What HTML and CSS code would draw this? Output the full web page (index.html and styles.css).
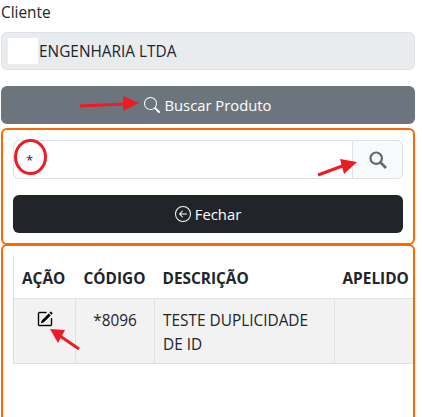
FILE: index.html
```html
<!DOCTYPE html>
<html lang="en">
<head>
  <meta charset="UTF-8" />
  <meta name="viewport" content="width=device-width, initial-scale=1.0"/>
  <title>Buscar Produto</title>
  <link rel="stylesheet" href="styles.css">
</head>
<body>
  <div class="page">
    <label class="field-label">Cliente</label>
    <div class="client-field">
      <span class="client-mask"></span>
      <span>ENGENHARIA LTDA</span>
    </div>

    <button class="btn btn-secondary">
      <svg class="icon" viewBox="0 0 16 16" fill="currentColor"><path d="M11.742 10.344a6.5 6.5 0 1 0-1.397 1.398h-.001c.03.04.062.078.098.115l3.85 3.85a1 1 0 0 0 1.415-1.414l-3.85-3.85a1.007 1.007 0 0 0-.115-.1zM12 6.5a5.5 5.5 0 1 1-11 0 5.5 5.5 0 0 1 11 0z"/></svg>
      Buscar Produto
    </button>

    <!-- Search panel -->
    <div class="panel panel-search">
      <div class="input-group">
        <input class="search-input" type="text" value="*">
        <button class="search-btn">
          <svg class="icon-lg" viewBox="0 0 18 18" fill="none" stroke="currentColor"><circle cx="7.2" cy="7.2" r="5.7" stroke-width="2.2"/><path d="M11.5 11.5 L17 17" stroke-width="2.6"/></svg>
        </button>
      </div>
      <button class="btn btn-dark">
        <svg class="icon" viewBox="0 0 16 16" fill="currentColor"><path fill-rule="evenodd" d="M1 8a7 7 0 1 0 14 0A7 7 0 0 0 1 8zm15 0A8 8 0 1 1 0 8a8 8 0 0 1 16 0zm-4.5-.5a.5.5 0 0 1 0 1H5.707l2.147 2.146a.5.5 0 0 1-.708.708l-3-3a.5.5 0 0 1 0-.708l3-3a.5.5 0 1 1 .708.708L5.707 7.5H11.5z"/></svg>
        Fechar
      </button>
    </div>

    <!-- Results -->
    <div class="panel panel-results">
      <table class="results">
        <thead>
          <tr>
            <th class="col-acao">AÇÃO</th>
            <th class="col-codigo">CÓDIGO</th>
            <th class="col-desc">DESCRIÇÃO</th>
            <th class="col-apelido">APELIDO</th>
          </tr>
        </thead>
        <tbody>
          <tr>
            <td class="center">
              <svg class="icon-edit" viewBox="0 0 16 16" fill="currentColor"><path d="M15.502 1.94a.5.5 0 0 1 0 .706L14.459 3.69l-2-2L13.502.646a.5.5 0 0 1 .707 0l1.293 1.293zm-1.75 2.456-2-2L4.939 9.21a.5.5 0 0 0-.121.196l-.805 2.414a.25.25 0 0 0 .316.316l2.414-.805a.5.5 0 0 0 .196-.12l6.813-6.814z"/><path fill-rule="evenodd" stroke="currentColor" stroke-width=".4" d="M1 13.5A1.5 1.5 0 0 0 2.5 15h11a1.5 1.5 0 0 0 1.5-1.5v-6a.5.5 0 0 0-1 0v6a.5.5 0 0 1-.5.5h-11a.5.5 0 0 1-.5-.5v-11a.5.5 0 0 1 .5-.5H9a.5.5 0 0 0 0-1H2.5A1.5 1.5 0 0 0 1 2.5v11z"/></svg>
            </td>
            <td class="center">*8096</td>
            <td>TESTE DUPLICIDADE DE ID</td>
            <td></td>
          </tr>
        </tbody>
      </table>
    </div>
  </div>

  <!-- Red annotations drawn over the screenshot -->
  <svg class="marks" width="422" height="417" viewBox="0 0 422 417">
    <ellipse cx="30.5" cy="157" rx="15" ry="16.5" fill="none" stroke="#ed1c24" stroke-width="3"/>
    <path d="M80 106 L124 104" stroke="#ed1c24" stroke-width="3" fill="none"/>
    <path d="M123 96 L139 103 L123 111 Z" fill="#ed1c24"/>
    <path d="M318 175 L345 165" stroke="#ed1c24" stroke-width="3" fill="none"/>
    <path d="M340 159 L357 162 L344 174 Z" fill="#ed1c24"/>
    <path d="M79 349 L60 336" stroke="#ed1c24" stroke-width="3" fill="none"/>
    <path d="M50 329 L65 330 L58 343 Z" fill="#ed1c24"/>
  </svg>
</body>
</html>
```

FILE: styles.css
```css
html, body {
  margin: 0;
  height: 417px;
  overflow: hidden;
}
body {
  font-family: "Open Sans", sans-serif;
  font-size: 15.4px;
  color: #212529;
  background: #fff;
  position: relative;
}
.page {
  width: 414px;
  margin-left: 1px;
}
.field-label {
  display: block;
  height: 32px;
  line-height: 26px;
}
.client-field {
  display: flex;
  align-items: center;
  gap: 1px;
  height: 38px;
  box-sizing: border-box;
  padding-left: 6px;
  background: #e9ecef;
  border: 1px solid #dee2e6;
  border-radius: 6px;
}
.client-mask {
  width: 30px;
  height: 26px;
  background: #fff;
}
.btn {
  display: flex;
  align-items: center;
  justify-content: center;
  gap: 4px;
  width: 100%;
  height: 38px;
  border: none;
  border-radius: 6px;
  color: #fff;
  font: inherit;
  font-size: 14.8px;
}
.btn-secondary {
  margin: 16px 0 4px;
  background: #6c757d;
}
.btn-dark {
  background: #212529;
}
.icon {
  width: 16px;
  height: 16px;
}
.panel {
  box-sizing: border-box;
  border: 2px solid #ff6600;
  border-radius: 6px;
  padding: 10px;
}
.panel-search {
  height: 117px;
}
.panel-results {
  height: 200px;
  margin-top: -1px;
  overflow: hidden;
  padding-right: 0;
}
.input-group {
  display: flex;
  height: 39px;
  margin-bottom: 16px;
}
.search-input {
  flex: 1;
  min-width: 0;
  box-sizing: border-box;
  padding: 0 12px;
  border: 1px solid #dee2e6;
  border-right: none;
  border-radius: 6px 0 0 6px;
  font: inherit;
  font-size: 13px;
  color: #212529;
  outline: none;
}
.search-btn {
  display: flex;
  align-items: center;
  justify-content: center;
  width: 51px;
  box-sizing: border-box;
  padding: 0;
  background: #f8f9fa;
  color: #64696e;
  border: 1px solid #dee2e6;
  border-radius: 0 6px 6px 0;
}
.icon-lg {
  width: 18px;
  height: 18px;
}
.results {
  border-collapse: collapse;
  table-layout: fixed;
  width: 470px;
}
.results th {
  box-sizing: border-box;
  height: 42px;
  padding: 3px 8px 0;
  text-align: left;
  font-weight: 700;
  white-space: nowrap;
  border-bottom: 1px solid #dee2e6;
}
.results thead tr {
  border-left: 1px solid #dee2e6;
}
.col-acao { width: 62px; }
.col-codigo { width: 79px; }
.col-desc { width: 180px; }
.col-apelido { width: 149px; }
.results td {
  height: 65px;
  padding: 10px 8px 6px;
  line-height: 24px;
  vertical-align: top;
  background: #f2f2f2;
  border: 1px solid #dee2e6;
  box-sizing: border-box;
}
.center {
  text-align: center;
}
.icon-edit {
  width: 16px;
  height: 16px;
  color: #000;
  display: block;
  margin: 2px auto 0;
}
.marks {
  position: absolute;
  top: 0;
  left: 0;
  pointer-events: none;
}
```
